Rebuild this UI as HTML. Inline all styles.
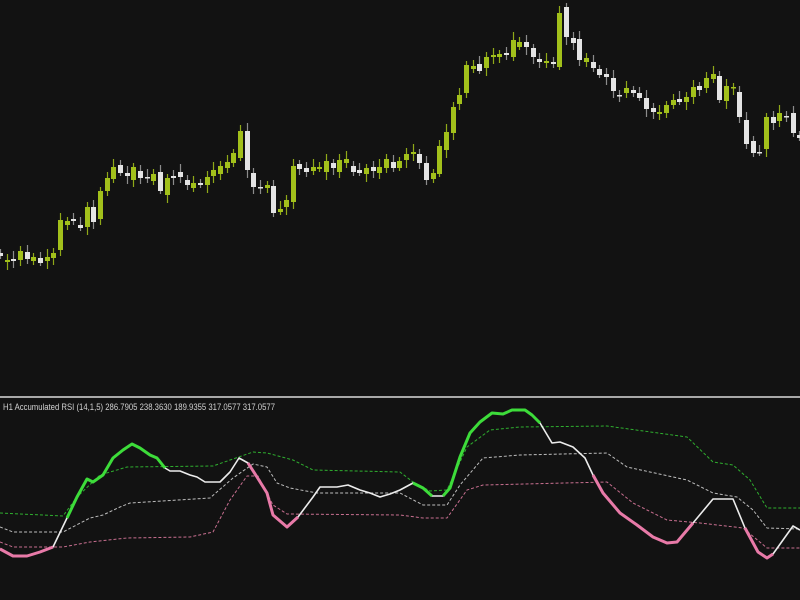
<!DOCTYPE html>
<html><head><meta charset="utf-8"><style>
html,body{margin:0;padding:0;background:#121212;width:800px;height:600px;overflow:hidden}
svg{display:block}
</style></head><body>
<svg id="s" width="800" height="600" xmlns="http://www.w3.org/2000/svg">
<rect width="800" height="600" fill="#121212"/>
<rect x="0" y="396" width="800" height="2" fill="#a8a8a8"/>
<text x="3" y="410" font-family="Liberation Sans, sans-serif" font-size="9" fill="#d0d0d0" textLength="272" lengthAdjust="spacingAndGlyphs">H1 Accumulated RSI (14,1,5) 286.7905 238.3630 189.9355 317.0577 317.0577</text>
<g id="c"></g><g id="l"></g>
</svg>
<script>
var C=[[0,253,256,0],[7,260,262,1],[13,259,261,0],[20,251,260,1],[27,252,259,0],[33,257,261,1],[40,258,263,0],[47,257,261,1],[53,253,258,1],[60,220,250,1],[67,221,225,1],[73,219,221,0],[80,225,228,0],[87,207,227,1],[93,207,222,0],[100,191,219,1],[107,178,191,1],[113,167,179,1],[120,165,173,0],[127,173,176,0],[133,167,180,1],[140,171,178,0],[147,177,178,0],[153,174,181,1],[160,172,191,0],[167,178,195,1],[173,176,178,0],[180,172,177,0],[187,180,185,0],[193,183,188,1],[200,183,185,0],[207,177,185,1],[213,170,176,1],[220,166,174,1],[227,162,168,1],[233,153,163,1],[240,131,158,1],[247,131,170,0],[253,173,187,0],[260,187,188,0],[267,185,188,1],[273,186,213,0],[280,209,212,1],[286,200,207,1],[293,166,202,1],[299,164,169,0],[306,168,172,0],[313,167,171,1],[319,167,169,1],[326,161,172,1],[333,163,168,0],[339,160,172,1],[346,159,163,1],[353,166,172,0],[359,170,173,0],[366,168,174,1],[373,167,171,0],[379,167,173,1],[386,159,168,1],[393,162,168,0],[399,161,168,1],[406,154,160,1],[413,152,154,1],[419,154,163,0],[426,163,180,0],[433,173,179,1],[439,146,174,1],[446,132,150,1],[453,107,133,1],[459,95,104,1],[466,65,93,1],[473,66,69,1],[479,64,71,0],[486,57,68,1],[493,55,57,1],[499,54,57,1],[506,53,55,0],[513,40,57,1],[519,42,47,1],[526,42,47,0],[533,48,57,0],[539,59,62,0],[546,61,63,1],[553,62,64,0],[559,13,67,1],[566,7,37,0],[573,38,43,0],[579,39,60,0],[586,58,62,1],[593,62,68,0],[599,69,75,0],[606,74,77,0],[613,78,91,0],[619,95,96,0],[626,88,93,1],[633,90,93,0],[639,93,98,0],[646,98,109,0],[653,108,112,0],[659,112,114,1],[666,105,113,1],[673,100,105,1],[679,99,102,0],[686,97,102,1],[693,87,97,1],[699,86,90,0],[706,78,88,1],[713,74,79,1],[719,76,100,0],[726,86,101,1],[733,87,88,1],[739,92,117,0],[746,120,144,0],[753,141,153,0],[759,152,153,0],[766,117,149,1],[773,117,123,0],[779,113,121,1],[786,116,117,0],[793,113,133,0],[799,135,138,0]];
var NS="http://www.w3.org/2000/svg",g=document.getElementById('c'),h='';
C.forEach(function(d,i){var col=d[3]?'#a2c01b':'#e4e4e4',wc=d[3]?'#8fa818':'#8c8c8c';var w1=4+(i*7%5),w2=3+(i*11%6);
h+='<line x1="'+(d[0]+0.5)+'" x2="'+(d[0]+0.5)+'" y1="'+(d[1]-w1)+'" y2="'+(d[2]+w2)+'" stroke="'+wc+'" stroke-width="1.2"/>';
h+='<rect x="'+(d[0]-2)+'" y="'+d[1]+'" width="5" height="'+Math.max(1.5,d[2]-d[1])+'" fill="'+col+'"/>';});
g.innerHTML=h;
function pl(p,c,w,da){return '<polyline fill="none" stroke="'+c+'" stroke-width="'+w+'" stroke-linejoin="round" '+(da?'stroke-dasharray="3,2" ':'')+'points="'+p+'"/>';}
var GU="0,513 63,516 77,497 100,475 127,467 213,466 253,452 267,453 293,460 313,470 400,472 413,482 430,491 447,490 467,447 490,430 520,427 607,426 687,437 713,462 733,465 750,480 767,508 800,508";
var WM="0,527 13,532 63,532 90,518 103,515 120,507 130,503 210,498 233,478 253,464 267,467 277,483 290,488 317,493 400,493 423,505 447,505 460,485 483,458 520,455 607,453 627,467 687,480 713,493 737,497 753,510 767,528 800,529";
var PL="0,542 13,547 63,547 90,542 127,538 190,537 213,532 230,500 247,476 258,476 273,505 287,514 400,515 423,518 447,518 467,490 483,485 607,482 633,503 667,520 700,523 743,528 767,548 800,548";
var M=[[0,549],[13,556],[27,556],[40,552],[53,547],[67,518],[77,497],[87,479],[93,482],[103,475],[113,458],[123,450],[132,444],[140,448],[150,455],[157,458],[165,468],[170,471],[180,471],[190,475],[197,477],[205,482],[220,482],[230,472],[239,458],[248,463],[257,477],[267,493],[273,515],[287,527],[298,517],[313,497],[320,487],[337,487],[348,485],[360,490],[370,493],[380,497],[390,494],[400,490],[413,483],[423,488],[432,496],[443,496],[450,488],[460,457],[470,433],[480,422],[492,413],[503,414],[512,410],[525,410],[532,415],[540,423],[552,443],[560,442],[573,447],[585,458],[593,475],[603,493],[620,513],[637,525],[653,537],[667,543],[677,542],[693,523],[713,499],[733,499],[745,528],[758,552],[767,558],[773,554],[793,526],[800,530]];
function seg(a,b){return M.filter(function(p){return p[0]>=a&&p[0]<=b}).map(function(p){return p.join(',')}).join(' ');}
var L=pl(GU,'#2fae2f',1,1)+pl(WM,'#bdbdbd',1,1)+pl(PL,'#c86f90',1,1)+pl(seg(0,800),'#ececec',1.6,0);
[[0,53,'#e87aa8'],[248,298,'#e87aa8'],[593,693,'#e87aa8'],[745,773,'#e87aa8'],[67,165,'#3ddc3a'],[413,432,'#3ddc3a'],[443,540,'#3ddc3a']].forEach(function(s){L+=pl(seg(s[0],s[1]),s[2],3,0);});
document.getElementById('l').innerHTML=L;
</script>
</body></html>
